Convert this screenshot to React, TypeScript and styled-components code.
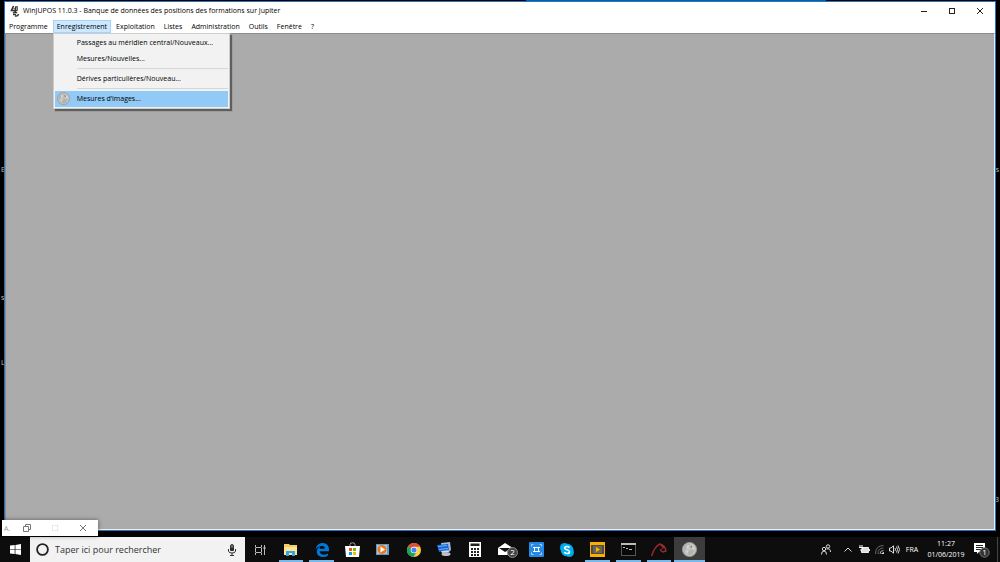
import React from "react";
import styled, { createGlobalStyle } from "styled-components";

const Global = createGlobalStyle`
  * { box-sizing: border-box; }
  html, body, #root { height: 100%; }
  body {
    margin: 0;
    background: #000;
    overflow: hidden;
    font-family: "Open Sans", "Noto Sans", sans-serif;
    font-size: 7px;
    color: #000;
  }
  button, input { font: inherit; color: inherit; border: 0; padding: 0; margin: 0; background: none; }
  svg { display: block; flex: none; }
`;

const Screen = styled.div`
  display: flex;
  flex-direction: column;
  height: 100vh;
  position: relative;
`;

const Desktop = styled.main`
  flex: 1;
  min-height: 0;
  display: flex;
  padding: 1px 4px 6px;
  position: relative;
`;

const BackWindowEdge = styled.div`
  position: absolute;
  top: 0;
  left: 526px;
  width: 300px;
  height: 1px;
  background: #0063b1;
`;

const DesktopLabel = styled.span<{ $top: number; $side: "left" | "right" }>`
  position: absolute;
  top: ${(p) => p.$top}px;
  ${(p) => p.$side}: 1px;
  line-height: 10px;
  color: #b4c6d2;
`;

const Window = styled.section`
  flex: 1;
  min-width: 0;
  display: flex;
  flex-direction: column;
  position: relative;
  background: #fff;
  border: 1px solid #2a72ba;
`;

const TitleBar = styled.header`
  height: 18px;
  display: flex;
  align-items: center;
  padding: 0 1px 0 5px;
`;

const Title = styled.h1`
  margin: 0 0 0 3px;
  flex: 1;
  font-size: 7px;
  font-weight: 400;
  line-height: 10px;
`;

const CaptionButton = styled.button`
  width: 28px;
  height: 18px;
  display: grid;
  place-items: center;
`;

const MenuBar = styled.nav`
  height: 13px;
  display: flex;
  gap: 1px;
`;

const MenuButton = styled.button<{ $open?: boolean }>`
  display: block;
  height: 13px;
  padding: 1px 3px 0;
  line-height: 10px;
  white-space: nowrap;
  border: 1px solid ${(p) => (p.$open ? "#a5d2f8" : "transparent")};
  background: ${(p) => (p.$open ? "#cce8ff" : "transparent")};
`;

const MenuEntry = styled.div`
  position: relative;
`;

const Dropdown = styled.div`
  position: absolute;
  z-index: 2;
  top: 13px;
  left: 0;
  width: 177px;
  padding: 1px;
  background: #f2f2f2;
  border: 1px solid #ccc;
  box-shadow: 2px 2px 1px rgba(0, 0, 0, 0.45);
`;

const DropdownItem = styled.button<{ $active?: boolean }>`
  display: flex;
  align-items: center;
  width: 100%;
  height: 16px;
  padding-bottom: 1px;
  text-align: left;
  background: ${(p) => (p.$active ? "#91c9f7" : "transparent")};
`;

const ItemIcon = styled.span`
  width: 22px;
  padding-left: 2px;
`;

const Separator = styled.hr`
  height: 1px;
  margin: 1px 0 2px 22px;
  border: 0;
  background: #d7d7d7;
`;

const Client = styled.div`
  flex: 1;
  background: #ababab;
  border: 1px solid #e8eef3;
  border-top-color: #8c8c8c;
  border-left-color: #8c8c8c;
`;

const MiniWindow = styled.div`
  position: absolute;
  z-index: 3;
  left: 2px;
  bottom: 1px;
  width: 96px;
  height: 16px;
  display: flex;
  align-items: center;
  padding-left: 2px;
  color: #999;
  background: #fff;
  box-shadow: 0 0 4px rgba(0, 0, 0, 0.5);
`;

const MiniTitle = styled.span`
  width: 9px;
`;

const MiniButton = styled.button`
  width: 28px;
  height: 16px;
  display: grid;
  place-items: center;
`;

const Taskbar = styled.footer`
  height: 25px;
  display: flex;
  background: #0d0d0d;
  color: #fff;
`;

const StartButton = styled.button`
  width: 30px;
  display: grid;
  place-items: center;
`;

const Search = styled.label`
  width: 215px;
  display: flex;
  align-items: center;
  padding: 0 8px 0 6px;
  background: #f2f2f2;
`;

const SearchInput = styled.input`
  flex: 1;
  min-width: 0;
  margin-left: 6px;
  font-size: 9px;
  outline: 0;
  &::placeholder { color: #333; opacity: 1; }
`;

const Apps = styled.div`
  width: 460px;
  display: grid;
  grid-template-columns: repeat(15, 1fr);
`;

const AppButton = styled.button<{ $running?: boolean; $active?: boolean }>`
  display: grid;
  place-items: center;
  position: relative;
  background: ${(p) => (p.$active ? "#3c3c3c" : "transparent")};
  &::after {
    content: "";
    display: ${(p) => (p.$running || p.$active ? "block" : "none")};
    position: absolute;
    bottom: 0;
    left: ${(p) => (p.$active ? 0 : 3)}px;
    right: ${(p) => (p.$active ? 0 : 3)}px;
    height: 2px;
    background: #76b9ed;
  }
`;

const Tray = styled.div`
  margin-left: auto;
  display: flex;
  align-items: stretch;
  padding-right: 2px;
  border-right: 1px solid #444;
  margin-right: 2px;
`;

const TrayButton = styled.button<{ $width: number }>`
  width: ${(p) => p.$width}px;
  display: grid;
  place-items: center;
`;

const Clock = styled.time`
  width: 44px;
  padding-top: 1px;
  text-align: center;
  line-height: 11px;
  white-space: nowrap;
`;

const Moon = ({ size }: { size: number }) => (
  <svg width={size} height={size} viewBox="0 0 16 16">
    <circle cx="8" cy="8" r="7.5" fill="#c2c2bf" stroke="#9a9a98" />
    <path d="M2 5Q5 1 9 2L8 5 4 7 3 11Q1 8 2 5M9 8L13 9 11 13 7 14 6 11Z" fill="#b2b2b0" />
    <path d="M5 4L8 3 7 6 5 7ZM10 3L13 5 14 8 11 7ZM4 9L7 9 6 12Z" fill="#d6d6d2" />
    <circle cx="10" cy="5" r="1" fill="#777" />
  </svg>
);

const JuposLogo = () => (
  <svg width="10" height="12" viewBox="0 0 10 12" fill="none" stroke="#333">
    <path d="M3.5 1L1.5 5.5H7.5M6 1.5L5 7" strokeWidth="1.6" />
    <path d="M5.5 1.5H7.5V5M3 3L5 3.5" stroke="#666" />
    <path d="M3 8Q5 6.5 7 8M3 9.5H6M5 11Q8 11.5 8.5 9" strokeWidth="1.4" />
  </svg>
);

const icons: Record<string, React.ReactNode> = {
  "Affichage des tâches": (
    <svg width="12" height="12" viewBox="0 0 12 12" fill="none" stroke="#bbb">
      <path d="M1.5 1V3M1.5 3.5H7.5M7.5 1V3M1.5 9V11M1.5 8.5H7.5M7.5 9V11M1.5 4V8M7.5 4V8M10.5 1V11" />
      <path d="M9.5 4H11.5" strokeWidth="2" />
    </svg>
  ),
  "Explorateur de fichiers": (
    <svg width="15" height="13" viewBox="0 0 15 13">
      <path d="M1 1H6L7 2H14V12H1Z" fill="#f6cc64" />
      <path d="M1 4H14V12H1Z" fill="#ffe59a" />
      <path d="M3 8H12V13H9V10H6V13H3Z" fill="#35a4e3" />
    </svg>
  ),
  "Microsoft Edge": (
    <svg width="14" height="14" viewBox="0 0 24 24">
      <path d="M1 11C2 4 7 0 13 0C20 0 24 5 24 11V14H8C8 18 12 20 16 20Q20 20 22 18V22Q19 24 14 24C7 24 3 20 3 15C3 11 5 8 9 6Q8 8 8 10H17C17 6 15 5 12 5C7 5 3 7 1 11Z" fill="#0078d7" />
    </svg>
  ),
  "Microsoft Store": (
    <svg width="15" height="15" viewBox="0 0 15 15">
      <path d="M5 4V2.5Q5 .8 7.5 .8Q10 .8 10 2.5V4" fill="none" stroke="#aaa" />
      <path d="M0 4H15L14 15H1Z" fill="#fff" />
      <path d="M4 6H7V9H4Z" fill="#f25022" /><path d="M8 6H11V9H8Z" fill="#7fba00" />
      <path d="M4 10H7V13H4Z" fill="#00a4ef" /><path d="M8 10H11V13H8Z" fill="#ffb900" />
    </svg>
  ),
  "Lecteur multimédia": (
    <svg width="13" height="13" viewBox="0 0 13 13">
      <rect y="1" width="13" height="11" fill="#5e9bc5" /><rect x="1" y="2" width="10" height="9" fill="#a8c8dc" />
      <circle cx="6" cy="6.5" r="4.5" fill="#ef7621" /><path d="M4.5 3.5L9 6.5 4.5 9.5Z" fill="#fff" />
    </svg>
  ),
  "Google Chrome": (
    <svg width="14" height="14" viewBox="0 0 14 14">
      <circle cx="7" cy="7" r="7" fill="#ffcd42" />
      <path d="M7 7L1 3.4A7 7 0 0 1 13.1 3.7H7Z" fill="#df4b3c" />
      <path d="M1 3.4A7 7 0 0 0 6.5 14L9.5 9 7 7Z" fill="#1ba261" />
      <circle cx="7" cy="7" r="3.3" fill="#fff" /><circle cx="7" cy="7" r="2.6" fill="#4385f4" />
    </svg>
  ),
  "Bureau à distance": (
    <svg width="15" height="15" viewBox="0 0 15 15">
      <path d="M4 1L13 0 14 8 12 10 5 9Z" fill="#a3b9dc" />
      <path d="M0 3L11 2 12 8 2 10Z" fill="#1766d3" />
      <path d="M1 4.5L10 3.5M2 7.5L11 6.5" stroke="#6cb4f5" />
      <path d="M4 9L11 8.5 12 10 5 11Z" fill="#d5dbe6" />
      <ellipse cx="9" cy="12" rx="4.5" ry="2" fill="#b9bec8" />
    </svg>
  ),
  "Calculatrice": (
    <svg width="12" height="15" viewBox="0 0 12 15">
      <path d="M0 0H12V15H0Z" fill="#fff" /><path d="M1.5 1.5H10.5V4H1.5Z" fill="#222" />
      <path d="M2 7H10M2 10H10M2 13H10" stroke="#222" strokeWidth="2" strokeDasharray="2 1" />
    </svg>
  ),
  "Courrier": (
    <svg width="24" height="16" viewBox="0 0 24 16">
      <path d="M4 6L11 1 19 6V13H4Z" fill="#fff" /><path d="M5 6H18L11 10Z" fill="#111" />
      <circle cx="18.5" cy="10.5" r="5" fill="#444" stroke="#888" />
      <text x="18.5" y="13.3" fontSize="8" textAnchor="middle" fill="#fff">2</text>
    </svg>
  ),
  "Capture": (
    <svg width="15" height="15" viewBox="0 0 15 15" fill="none" stroke="#fff">
      <rect width="15" height="15" rx="1" fill="#2589e8" stroke="none" />
      <path d="M2.5 4.5V2.5H4.5M10.5 2.5H12.5V4.5M2.5 10.5V12.5H4.5M10.5 12.5H12.5V10.5" stroke="#a8d3fa" />
      <path d="M5.5 5V10M9.5 5V10M4 5.5H11M4 9.5H11" />
    </svg>
  ),
  "Skype": (
    <svg width="14" height="14" viewBox="0 0 14 14">
      <circle cx="4.5" cy="4.5" r="4.5" fill="#009ee5" /><circle cx="9.5" cy="9.5" r="4.5" fill="#009ee5" /><circle cx="7" cy="7" r="6.3" fill="#00aff0" />
      <path d="M9.5 4.8C8.8 3 4.7 3 4.7 5.2C4.7 7.2 9.5 6.3 9.5 8.8C9.5 11.2 5 11 4.4 9" fill="none" stroke="#fff" strokeWidth="1.6" />
    </svg>
  ),
  "Vidéo": (
    <svg width="15" height="15" viewBox="0 0 15 15">
      <rect width="15" height="15" fill="#f9ae00" /><rect x="1" y="3" width="13" height="9" fill="#4b4b48" />
      <rect x="3" y="4" width="9" height="7" fill="#6c654f" /><path d="M6 5L10 7.5 6 10Z" fill="#ffb900" />
    </svg>
  ),
  "Invite de commandes": (
    <svg width="15" height="13" viewBox="0 0 15 13">
      <rect x=".5" y=".5" width="14" height="12" fill="#080808" stroke="#555" /><path d="M0 1H15" stroke="#bbb" strokeWidth="2" />
      <path d="M2 4.5H4M5 5.5H7M8 6.5H11" stroke="#bbb" />
    </svg>
  ),
  "Acquisition": (
    <svg width="16" height="15" viewBox="0 0 16 15" fill="none" stroke="#9c2a2e">
      <path d="M.5 14Q4 4 9 2Q14 3 15 9L12 10 9 8M9 2L13 6" strokeWidth="1.4" />
      <path d="M9 8L12 6" />
    </svg>
  ),
  "WinJUPOS": <Moon size={15} />,
};

const running = ["Explorateur de fichiers", "Microsoft Edge", "Vidéo", "Invite de commandes", "Acquisition"];
const menusAfter = ["Exploitation", "Listes", "Administration", "Outils", "Fenêtre", "?"];

export default function App() {
  return (
    <Screen>
      <Global />
      <Desktop>
        <BackWindowEdge />
        <DesktopLabel $top={165} $side="left">E</DesktopLabel>
        <DesktopLabel $top={293} $side="left">s</DesktopLabel>
        <DesktopLabel $top={358} $side="left">L</DesktopLabel>
        <DesktopLabel $top={165} $side="right">s</DesktopLabel>
        <DesktopLabel $top={495} $side="right">3</DesktopLabel>
        <Window>
          <TitleBar>
            <JuposLogo />
            <Title>WinJUPOS 11.0.3 - Banque de données des positions des formations sur Jupiter</Title>
            <CaptionButton aria-label="Réduire">
              <svg width="8" height="8" stroke="#222"><path d="M1 4.5H7" /></svg>
            </CaptionButton>
            <CaptionButton aria-label="Agrandir">
              <svg width="8" height="8" fill="none" stroke="#222"><rect x="1.5" y="1.5" width="5" height="5" /></svg>
            </CaptionButton>
            <CaptionButton aria-label="Fermer">
              <svg width="8" height="8" stroke="#222"><path d="M1 1L7 7M7 1L1 7" /></svg>
            </CaptionButton>
          </TitleBar>
          <MenuBar>
            <MenuButton>Programme</MenuButton>
            <MenuEntry>
              <MenuButton $open aria-expanded="true">Enregistrement</MenuButton>
              <Dropdown>
                <DropdownItem><ItemIcon />Passages au méridien central/Nouveaux...</DropdownItem>
                <DropdownItem><ItemIcon />Mesures/Nouvelles...</DropdownItem>
                <Separator />
                <DropdownItem><ItemIcon />Dérives particulières/Nouveau...</DropdownItem>
                <Separator />
                <DropdownItem $active><ItemIcon><Moon size={13} /></ItemIcon>Mesures d’images...</DropdownItem>
              </Dropdown>
            </MenuEntry>
            {menusAfter.map((name) => <MenuButton key={name}>{name}</MenuButton>)}
          </MenuBar>
          <Client />
        </Window>
        <MiniWindow>
          <MiniTitle>A.</MiniTitle>
          <MiniButton aria-label="Restaurer">
            <svg width="8" height="8" fill="none" stroke="#777"><path d="M.5 2.5H5.5V7.5H.5ZM2.5 2V.5H7.5V5.5H6" /></svg>
          </MiniButton>
          <MiniButton aria-label="Agrandir" disabled>
            <svg width="8" height="8" fill="none" stroke="#e8e8e8"><rect x="1.5" y="1.5" width="5" height="5" /></svg>
          </MiniButton>
          <MiniButton aria-label="Fermer">
            <svg width="8" height="8" stroke="#777"><path d="M1 1L7 7M7 1L1 7" /></svg>
          </MiniButton>
        </MiniWindow>
      </Desktop>
      <Taskbar>
        <StartButton aria-label="Démarrer">
          <svg width="11" height="11" viewBox="0 0 11 11" fill="#fff"><path d="M0 1.5L4.7 1V5.2H0ZM5.4 .9L11 0V5.2H5.4ZM0 5.8H4.7V10L0 9.5ZM5.4 5.8H11V11L5.4 10.1Z" /></svg>
        </StartButton>
        <Search>
          <svg width="13" height="13" fill="none" stroke="#222" strokeWidth="1.8"><circle cx="6.5" cy="6.5" r="5.4" /></svg>
          <SearchInput aria-label="Rechercher" placeholder="Taper ici pour rechercher" />
          <svg width="10" height="12" viewBox="0 0 10 12" fill="none" stroke="#333"><rect x="3.5" y=".5" width="3" height="6" rx="1.5" fill="#777" /><path d="M3.5 4H6.5V6.5H3.5Z" fill="#222" /><path d="M1.5 5V7Q1.5 9 5 9Q8.5 9 8.5 7V5M5 9V11.5M3 11.5H7" /></svg>
        </Search>
        <Apps>
          {Object.keys(icons).map((name) => (
            <AppButton key={name} aria-label={name} $running={running.includes(name)} $active={name === "WinJUPOS"}>
              {icons[name]}
            </AppButton>
          ))}
        </Apps>
        <Tray>
          <TrayButton $width={24} aria-label="Contacts">
            <svg width="10" height="11" viewBox="0 0 10 11" fill="none" stroke="#ddd"><circle cx="3" cy="5" r="1.7" /><path d="M.5 10.5Q.5 7 3 7Q5.5 7 5.5 10.5" /><circle cx="7" cy="2.5" r="1.7" /><path d="M5.5 5Q9.5 4 9.5 8" /></svg>
          </TrayButton>
          <TrayButton $width={20} aria-label="Icônes cachées">
            <svg width="8" height="5" fill="none" stroke="#ddd"><path d="M.5 4.5L4 1 7.5 4.5" /></svg>
          </TrayButton>
          <TrayButton $width={12} aria-label="Batterie">
            <svg width="11" height="9" viewBox="0 0 11 9"><path d="M3 2.5H9.5V7.5H2.5V5" fill="#ddd" stroke="#eee" /><path d="M1 0V2M3 0V2M0 2.5H4V4H2V6" fill="none" stroke="#fff" /><path d="M10.5 4V6" stroke="#ddd" /></svg>
          </TrayButton>
          <TrayButton $width={18} aria-label="Réseau">
            <svg width="9" height="9" viewBox="0 0 9 9" fill="none" stroke="#666"><path d="M.5 9Q.5 .5 8.5 .5M3 9Q3 3 8.5 3" /><path d="M5 9Q5 5.5 8.5 5.5" stroke="#aaa" /><path d="M6.5 9L8.5 7.5V9Z" fill="#fff" stroke="#ddd" /></svg>
          </TrayButton>
          <TrayButton $width={12} aria-label="Volume">
            <svg width="11" height="9" viewBox="0 0 11 9" fill="none" stroke="#ddd"><path d="M.5 3H2L4.5 .8V8.2L2 6H.5ZM6 3Q7 4.5 6 6M7.5 1.5Q9.5 4.5 7.5 7.5M9 .5Q12 4.5 9 8.5" /></svg>
          </TrayButton>
          <TrayButton $width={24}>FRA</TrayButton>
          <Clock>11:27<br />01/06/2019</Clock>
          <TrayButton $width={27} aria-label="Notifications">
            <svg width="17" height="16" viewBox="0 0 17 16"><path d="M1 1H12V10H6L4 12V10H1Z" fill="#fff" /><path d="M3 3.5H10M3 5.5H10M3 7.5H8" stroke="#222" /><circle cx="11.5" cy="10.5" r="4.7" fill="#333" stroke="#777" /><text x="11.5" y="13.3" fontSize="8" textAnchor="middle" fill="#fff">1</text></svg>
          </TrayButton>
        </Tray>
      </Taskbar>
    </Screen>
  );
}
